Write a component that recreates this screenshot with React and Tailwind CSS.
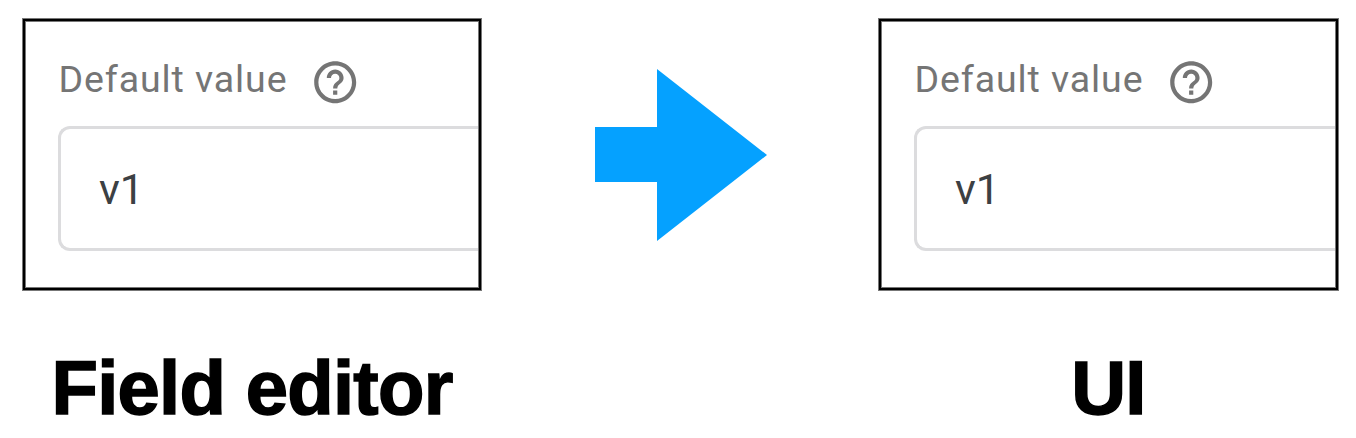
function HelpIcon() {
  return (
    <svg viewBox="0 0 24 24" className="size-[50.4px] shrink-0 fill-[#757575]" aria-hidden="true">
      <path d="M11 18h2v-2h-2v2zm1-16C6.48 2 2 6.48 2 12s4.48 10 10 10 10-4.48 10-10S17.52 2 12 2zm0 18c-4.41 0-8-3.59-8-8s3.59-8 8-8 8 3.59 8 8-3.59 8-8 8zm0-14c-2.21 0-4 1.79-4 4h2c0-1.1.9-2 2-2s2 .9 2 2c0 2-3 1.75-3 5h2c0-2.25 3-2.5 3-5 0-2.21-1.79-4-4-4z" />
    </svg>
  );
}

function FieldPanel() {
  return (
    <div className="flex h-[271px] w-full flex-col overflow-hidden border-2 border-black pt-[36px] pl-[33px] shadow-[0_0_0_1px_#777,inset_0_0_0_1px_#777]">
      <div className="flex h-[50px] shrink-0 items-center">
        <span className="-mt-[7px] w-[252px] shrink-0 pl-[0.5px] font-['Roboto',sans-serif] text-[37.5px] leading-[50px] tracking-[0.9px] whitespace-nowrap text-[#757575]">
          Default value
        </span>
        <HelpIcon />
      </div>
      <div className="mt-[19px] mr-px flex h-[125px] shrink-0 items-center rounded-l-[12px] border-[3px] border-r-0 border-[#dcdcde] pt-[2px] pl-[38px] font-['Roboto',sans-serif] text-[43px] text-[#3c4043]">
        v1
      </div>
    </div>
  );
}

function Example({ label, className }) {
  return (
    <section className={className}>
      <FieldPanel />
      <h2 className="mt-[53px] text-center font-['Liberation_Sans',Arial,sans-serif] text-[76px] leading-[90px] font-bold tracking-[-0.7px] whitespace-nowrap text-black [-webkit-text-stroke:1.5px_black]">
        {label}
      </h2>
    </section>
  );
}

export default function App() {
  return (
    <main className="flex h-[438px] w-[1356px] items-start overflow-hidden bg-white pt-[19px] pl-[23px]">
      <Example label="Field editor" className="w-[458px] shrink-0" />
      <svg viewBox="0 0 172 172" className="mt-[50px] ml-[114px] h-[172px] w-[172px] shrink-0 fill-[#05a1ff]" aria-hidden="true">
        <path d="M0 58H62V0L172 86L62 172V113H0Z" />
      </svg>
      <Example label="UI" className="ml-[112px] w-[459px] shrink-0" />
    </main>
  );
}
